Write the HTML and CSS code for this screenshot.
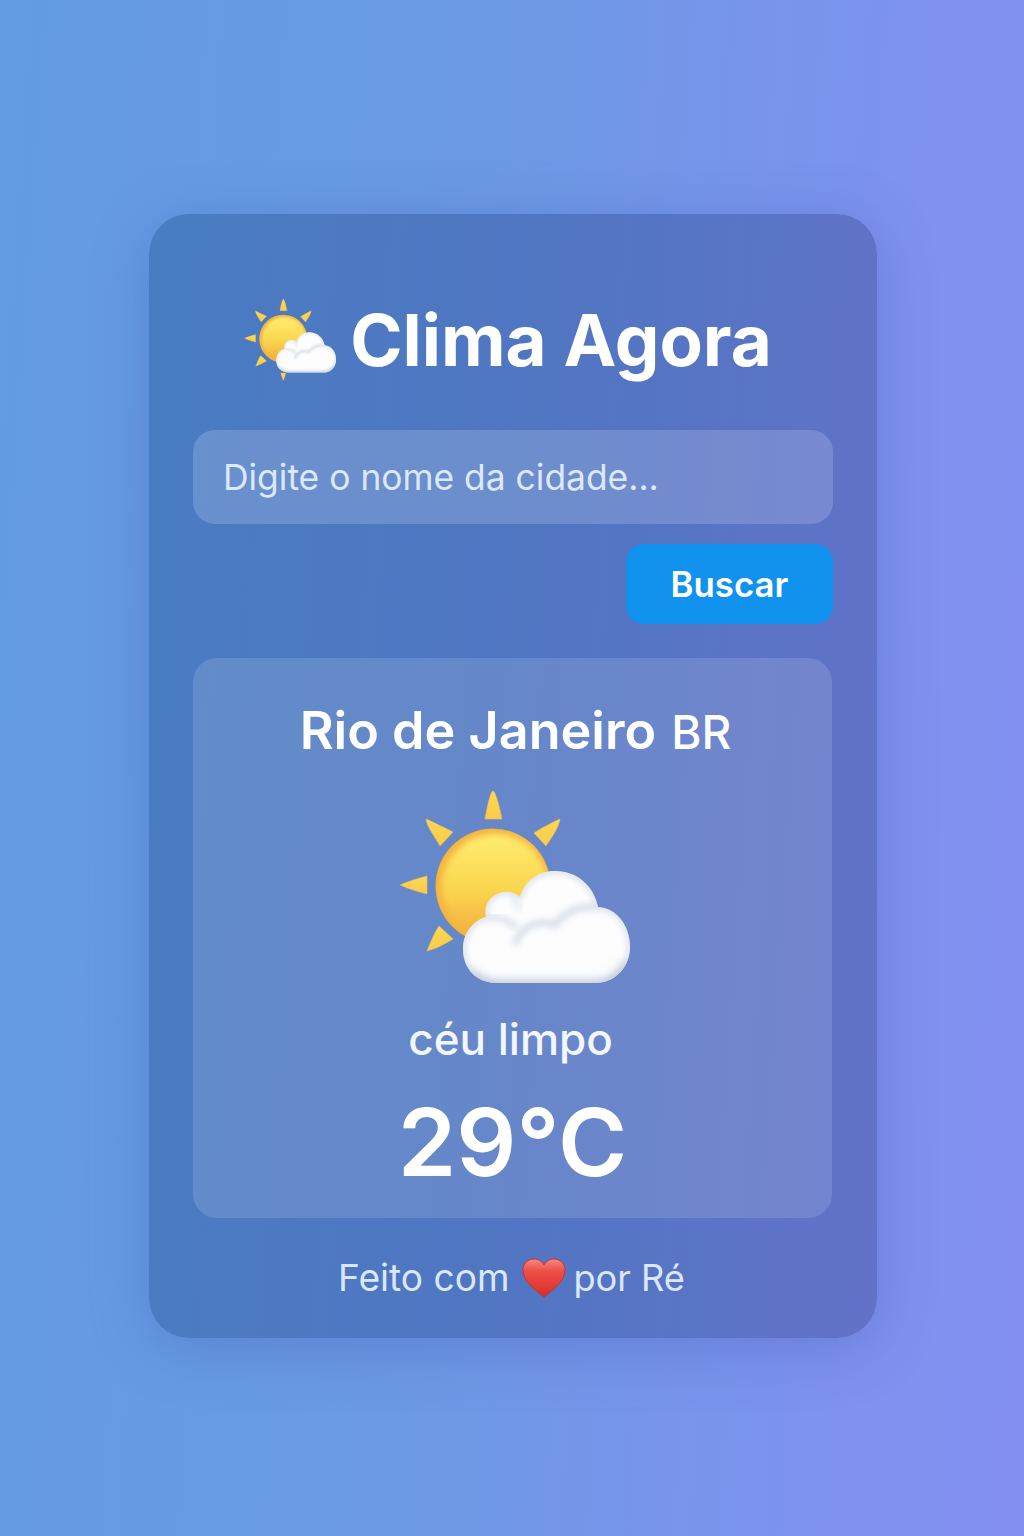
FILE: index.html
```html
<!DOCTYPE html>
<html lang="pt-BR">
<head>
<meta charset="utf-8">
<title>Clima Agora</title>
<link rel="stylesheet" href="styles.css">
</head>
<body>
<svg class="defs" width="0" height="0" aria-hidden="true">
  <defs>
    <linearGradient id="sunFill" x1="0" y1="0" x2="0" y2="1">
      <stop offset="0" stop-color="#ffec70"/>
      <stop offset="0.5" stop-color="#fbd850"/>
      <stop offset="1" stop-color="#f3aa3c"/>
    </linearGradient>
    <linearGradient id="rayFill" x1="0" y1="0" x2="0" y2="1">
      <stop offset="0" stop-color="#fcd75a"/>
      <stop offset="1" stop-color="#fbcb48"/>
    </linearGradient>
    <linearGradient id="heartFill" x1="0" y1="0" x2="0" y2="1">
      <stop offset="0" stop-color="#f58a84"/>
      <stop offset="0.3" stop-color="#ee5148"/>
      <stop offset="1" stop-color="#d92d28"/>
    </linearGradient>
    <filter id="soft" x="-20%" y="-20%" width="140%" height="140%"><feGaussianBlur stdDeviation="3"/></filter>
    <filter id="softer" x="-20%" y="-40%" width="140%" height="180%"><feGaussianBlur stdDeviation="6"/></filter>
    <clipPath id="cloudClip"><path d="M101 138 C98 122 110 112 124 113 C129 114 133 116 135 118 C140 102 153 92 170 92 C192 92 209 107 213 128 C232 129 245 147 245 168 C245 188 230 204 210 204 L112 204 C92 204 78 190 78 170 C78 154 88 142 101 138 Z"/></clipPath>
    <clipPath id="sunClip"><circle cx="108" cy="107" r="57"/></clipPath>
    <g id="sunPart">
      <g fill="url(#rayFill)" stroke="#f5c042" stroke-width="0.6" stroke-linejoin="round">
        <path d="M100 40 C102 30 105 13 108 12 C111 13 115 30 117 40 Z"/>
        <path d="M41 40 C50 44 62 50 68 53 L55 67 C50 58 42 48 41 40 Z"/>
        <path d="M175 40 C166 44 155 50 149 54 L161 67 C167 58 174 48 175 40 Z"/>
        <path d="M15 106 C24 102 34 99 42 97 L42 115 C34 113 24 110 15 106 Z"/>
        <path d="M42 172 C46 162 50 153 54 147 L68 160 C60 165 50 170 42 172 Z"/>
      </g>
      <circle cx="108" cy="107" r="57.5" fill="#f2ad3c"/>
      <g clip-path="url(#sunClip)">
        <circle cx="108" cy="107" r="57" fill="#f3b540"/>
        <circle cx="110" cy="108" r="53" fill="url(#sunFill)" filter="url(#soft)"/>
      </g>
    </g>
    <g id="cloudPart">
      <path d="M101 138 C98 122 110 112 124 113 C129 114 133 116 135 118 C140 102 153 92 170 92 C192 92 209 107 213 128 C232 129 245 147 245 168 C245 188 230 204 210 204 L112 204 C92 204 78 190 78 170 C78 154 88 142 101 138 Z" fill="#fdfdfe"/>
      <g clip-path="url(#cloudClip)">
        <path d="M101 138 C98 122 110 112 124 113 C129 114 133 116 135 118 C140 102 153 92 170 92 C192 92 209 107 213 128 C232 129 245 147 245 168 C245 188 230 204 210 204 L112 204 C92 204 78 190 78 170 C78 154 88 142 101 138 Z" fill="none" stroke="#ccd6e0" stroke-width="4" filter="url(#soft)"/>
        <path d="M84 194 C95 206 105 208 112 208 L210 208 C225 208 238 198 244 184" fill="none" stroke="#b4c2d0" stroke-width="9" filter="url(#softer)"/>
        <path d="M101 138 C112 138 124 140 132 150" fill="none" stroke="#dfe5ec" stroke-width="7" filter="url(#soft)"/>
        <path d="M130 166 C134 150 150 139 170 146 C178 134 194 126 213 128" fill="none" stroke="#d8e0e9" stroke-width="7" filter="url(#soft)"/>
        <path d="M126 116 C130 122 134 126 136 132" fill="none" stroke="#e4e9f0" stroke-width="5" filter="url(#soft)"/>
      </g>
    </g>
    <symbol id="sunCloudLarge" viewBox="0 0 260 215">
      <use href="#sunPart"/>
      <use href="#cloudPart"/>
    </symbol>
    <symbol id="sunCloudSmall" viewBox="0 0 260 215">
      <use href="#sunPart"/>
      <path d="M102 189 C104 196 106 203 108 207 C110 203 112 196 114 189 Z" fill="url(#rayFill)" stroke="#f5c042" stroke-width="0.6"/>
      <use href="#cloudPart" transform="translate(24.2 12.8) scale(0.857)"/>
    </symbol>
  </defs>
</svg>
<main class="card">
  <h1 class="title">
    <svg class="icon-small"><use href="#sunCloudSmall"/></svg>
    <span>Clima Agora</span>
  </h1>
  <form class="search">
    <input class="search-input" type="text" placeholder="Digite o nome da cidade...">
    <button class="search-button" type="button">Buscar</button>
  </form>
  <section class="result">
    <h2 class="city">Rio de Janeiro <span class="country">BR</span></h2>
    <svg class="icon-large"><use href="#sunCloudLarge"/></svg>
    <p class="desc">céu limpo</p>
    <p class="temp">29°C</p>
  </section>
  <footer class="foot">
    <span>Feito com</span>
    <svg class="heart" viewBox="0 0 44 40" aria-hidden="true"><path d="M22 39 C14 32 1 24 1 12 C1 5 6 1 12 1 C16 1 20 3 22 7 C24 3 28 1 32 1 C38 1 43 5 43 12 C43 24 30 32 22 39 Z" fill="url(#heartFill)" stroke="#cf2f2a" stroke-width="1"/></svg>
    <span class="foot-by">por Ré</span>
  </footer>
</main>
</body>
</html>
```
FILE: styles.css
```css
* { box-sizing: border-box; }
html, body { height: 100%; }
body {
  margin: 0;
  min-height: 1536px;
  display: flex;
  align-items: flex-start;
  justify-content: center;
  padding: 214px 0 0 2px;
  font-family: Inter, "Liberation Sans", sans-serif;
  color: #fff;
  background: linear-gradient(94deg, #639ce3 0%, #6c99e6 45%, #7a94ec 72%, #8490f2 100%);
}
.defs { position: absolute; }
.card {
  width: 728px;
  height: 1124px;
  padding: 79px 44px 0;
  border-radius: 40px;
  background: linear-gradient(94deg, #497cc3 0%, #5076c2 50%, #6272c8 100%);
  box-shadow: 0 10px 60px rgba(50, 70, 160, 0.28);
}
.title {
  margin: 0;
  height: 94px;
  padding-right: 16px;
  display: flex;
  align-items: center;
  justify-content: center;
  gap: 3px;
  font-size: 70.8px;
  font-weight: 700;
}
.icon-small { width: 109px; height: 90px; margin-bottom: 3px; flex: none; }
.search {
  margin-top: 43px;
  display: flex;
  flex-direction: column;
  align-items: flex-end;
  gap: 20px;
}
.search-input {
  width: 640px;
  height: 94px;
  padding: 0 30px;
  border: 0;
  border-radius: 22px;
  outline: none;
  background: rgba(255, 255, 255, 0.17);
  font: 400 35.4px Inter, "Liberation Sans", sans-serif;
  color: #fff;
}
.search-input::placeholder { color: #dce8fb; opacity: 1; }
.search-button {
  width: 207px;
  height: 80px;
  border: 0;
  border-radius: 18px;
  background: #1192ef;
  font: 600 34.8px Inter, "Liberation Sans", sans-serif;
  color: #fff;
}
.result {
  margin-top: 34px;
  width: 639px;
  height: 560px;
  padding-top: 43px;
  border-radius: 24px;
  background: rgba(255, 255, 255, 0.13);
  display: flex;
  flex-direction: column;
  align-items: center;
}
.city {
  margin: 0;
  padding-left: 6px;
  font-size: 52.1px;
  font-weight: 600;
  line-height: 60px;
  white-space: nowrap;
}
.country { margin-left: 2px; font-size: 46px; font-weight: 500; }
.icon-large { width: 260px; height: 215px; margin: 17px 0 0 5px; flex: none; }
.desc {
  margin: 18px 4px 0 0;
  font-size: 44px;
  font-weight: 500;
  line-height: 54px;
  color: #f2f6ff;
}
.temp {
  margin: 21px 0 0;
  font-size: 94px;
  font-weight: 600;
  line-height: 110px;
}
.foot {
  margin-top: 36px;
  padding-right: 3px;
  display: flex;
  align-items: center;
  justify-content: center;
  font-size: 37.1px;
  line-height: 48px;
  color: #dbe7fb;
}
.foot-by { font-size: 36.2px; }
.heart { width: 44px; height: 40px; flex: none; margin: 0 7px 0 13px; }
```
